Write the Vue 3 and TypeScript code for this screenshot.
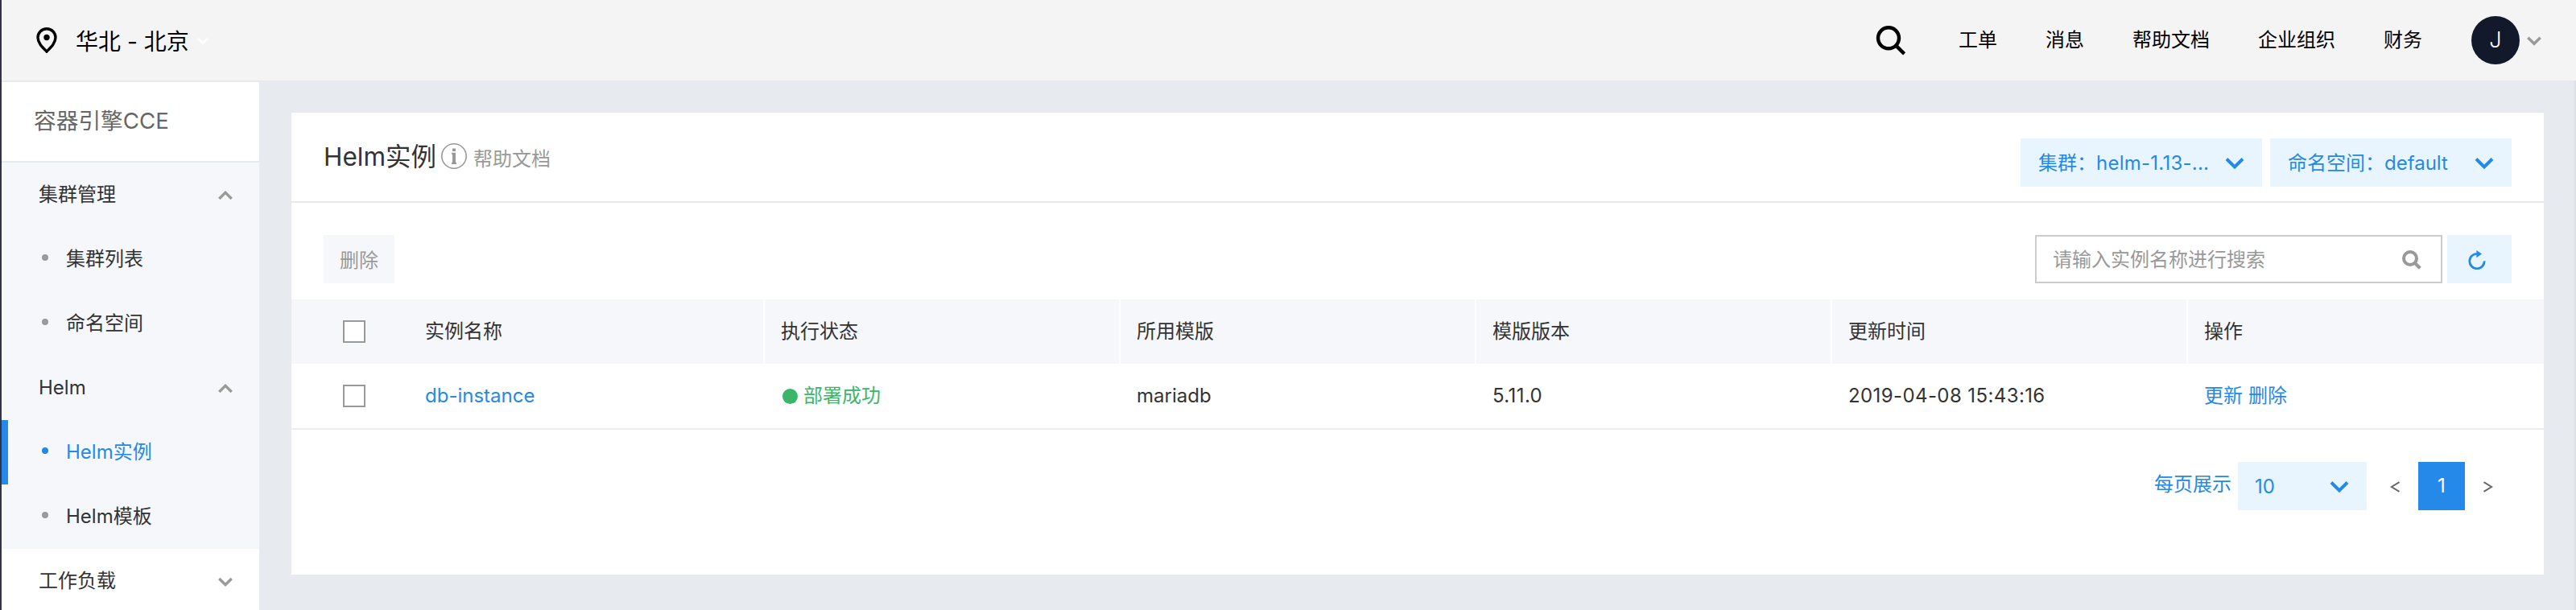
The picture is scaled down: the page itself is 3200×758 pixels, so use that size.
<script setup lang="ts">
interface MenuEntry {
  label: string
  kind: 'group' | 'item'
  open?: boolean
  active?: boolean
}

const navLinks: string[] = ['工单', '消息', '帮助文档', '企业组织', '财务']

const menu: MenuEntry[] = [
  { label: '集群管理', kind: 'group', open: true },
  { label: '集群列表', kind: 'item' },
  { label: '命名空间', kind: 'item' },
  { label: 'Helm', kind: 'group', open: true },
  { label: 'Helm实例', kind: 'item', active: true },
  { label: 'Helm模板', kind: 'item' },
  { label: '工作负载', kind: 'group', open: false },
]

const columns: string[] = ['实例名称', '执行状态', '所用模版', '模版版本', '更新时间', '操作']

const rows = [
  {
    name: 'db-instance',
    status: '部署成功',
    template: 'mariadb',
    version: '5.11.0',
    updated: '2019-04-08 15:43:16',
  },
]
</script>

<template>
  <div class="page">
    <header class="topbar">
      <svg class="pin" viewBox="0 0 26 32">
        <path d="M13 1.8C6.8 1.8 2 6.5 2 12.6 2 19.6 8 25 13 30c5-5 11-10.4 11-17.4C24 6.5 19.2 1.8 13 1.8z" fill="none" stroke="#000" stroke-width="3.4" />
        <circle cx="13" cy="12.5" r="3.7" fill="#000" />
      </svg>
      <span class="region">华北 - 北京</span>
      <svg class="region-arrow" viewBox="0 0 16 10"><path d="M1.5 2L8 7.5L14.5 2" fill="none" stroke="#fff" stroke-width="2.6" /></svg>
      <nav class="links">
        <svg class="top-search" viewBox="0 0 38 38">
          <circle cx="16" cy="16.3" r="13" fill="none" stroke="#000" stroke-width="4.4" />
          <path d="M25.3 25.6L35.6 35.9" stroke="#000" stroke-width="4.4" />
        </svg>
        <a v-for="link in navLinks" :key="link" class="link">{{ link }}</a>
      </nav>
      <span class="avatar">J</span>
      <svg class="user-arrow" viewBox="0 0 18 12"><path d="M1.3 1.8L9 9.3L16.7 1.8" fill="none" stroke="#999" stroke-width="3.4" /></svg>
    </header>

    <div class="body">
      <aside class="sidebar">
        <h2 class="product">容器引擎CCE</h2>
        <ul class="menu">
          <li
            v-for="entry in menu"
            :key="entry.label"
            :class="['entry', entry.kind, { active: entry.active, closed: entry.kind === 'group' && !entry.open }]"
          >
            <i v-if="entry.kind === 'item'" class="dot"></i>
            <span class="label">{{ entry.label }}</span>
            <svg v-if="entry.kind === 'group'" class="fold" viewBox="0 0 18 12">
              <path :d="entry.open ? 'M1.3 10L9 2.4L16.7 10' : 'M1.3 2L9 9.6L16.7 2'" fill="none" stroke="#999" stroke-width="3.4" />
            </svg>
          </li>
        </ul>
      </aside>

      <main class="content">
        <section class="card">
          <div class="card-head">
            <h1 class="title">Helm实例</h1>
            <svg class="info" viewBox="0 0 32 32">
              <circle cx="16" cy="16" r="15.2" fill="none" stroke="#999" stroke-width="1.6" />
              <path d="M14 6.5h4v3.6h-4zM13 11.8H18V24h1v2h-6v-2h1v-10.2h-1z" fill="#999" />
            </svg>
            <a class="help">帮助文档</a>
            <div class="selects">
              <div class="select">
                <span>集群：<em>helm-1.13-...</em></span>
                <svg class="arrow" viewBox="0 0 24 16"><path d="M2 2.5L12 12.5L22 2.5" fill="none" stroke="#2589e9" stroke-width="4" /></svg>
              </div>
              <div class="select">
                <span>命名空间：default</span>
                <svg class="arrow" viewBox="0 0 24 16"><path d="M2 2.5L12 12.5L22 2.5" fill="none" stroke="#2589e9" stroke-width="4" /></svg>
              </div>
            </div>
          </div>

          <div class="toolbar">
            <button class="delete" type="button">删除</button>
            <div class="search">
              <span class="placeholder">请输入实例名称进行搜索</span>
              <svg class="search-icon" viewBox="0 0 24 24">
                <circle cx="10" cy="10" r="8" fill="none" stroke="#999" stroke-width="4" />
                <path d="M15.5 15.5L22.3 22.3" stroke="#999" stroke-width="4.2" />
              </svg>
            </div>
            <button class="refresh" type="button">
              <svg viewBox="0 0 24 24">
                <path d="M12.5 4.4A9.2 9.2 0 1 0 21.2 13.4" fill="none" stroke="#2589e9" stroke-width="2.8" />
                <path d="M11.4 0L18 4.6L11.4 9.2z" fill="#2589e9" />
              </svg>
            </button>
          </div>

          <div class="grid head">
            <div class="check"><i class="box"></i></div>
            <div v-for="col in columns" :key="col" class="cell">{{ col }}</div>
          </div>
          <div v-for="row in rows" :key="row.name" class="grid row">
            <div class="check"><i class="box"></i></div>
            <div class="cell"><a class="blue">{{ row.name }}</a></div>
            <div class="cell status"><i class="state"></i><span>{{ row.status }}</span></div>
            <div class="cell">{{ row.template }}</div>
            <div class="cell number">{{ row.version }}</div>
            <div class="cell number">{{ row.updated }}</div>
            <div class="cell actions"><a>更新</a><a>删除</a></div>
          </div>

          <div class="pager">
            <span class="per-page">每页展示</span>
            <div class="size">
              <span>10</span>
              <svg class="arrow" viewBox="0 0 24 16"><path d="M2 2.5L12 12.5L22 2.5" fill="none" stroke="#2589e9" stroke-width="4" /></svg>
            </div>
            <svg class="step" viewBox="0 0 12 14"><path d="M11.5 1.2L1.8 7L11.5 12.8" fill="none" stroke="#666" stroke-width="2" /></svg>
            <span class="current">1</span>
            <svg class="step" viewBox="0 0 12 14"><path d="M0.5 1.2L10.2 7L0.5 12.8" fill="none" stroke="#666" stroke-width="2" /></svg>
          </div>
        </section>
      </main>
      <div class="edge"></div>
    </div>
  </div>
</template>

<style>
body {
  margin: 0;
}
</style>

<style scoped>
* {
  box-sizing: border-box;
}
.page {
  width: 3200px;
  height: 758px;
  overflow: hidden;
  border-left: 2px solid #32324a;
  background: #e7eaef;
  color: #333;
  font-family: Inter, "Noto Sans CJK SC", sans-serif;
  font-size: 24px;
  font-weight: 380;
  line-height: 34px;
  white-space: nowrap;
  display: flex;
  flex-direction: column;
}
.topbar {
  height: 100px;
  flex: none;
  background: #f4f4f4;
  display: flex;
  align-items: center;
  padding: 0 43px 0 43px;
  color: #000;
}
.pin {
  width: 26px;
  height: 32px;
  margin-right: 23px;
}
.region {
  font-size: 28px;
  margin-top: 3px;
}
.region-arrow {
  width: 16px;
  height: 10px;
  margin: 2px 0 0 9px;
}
.links {
  margin-left: auto;
  display: flex;
  align-items: center;
  gap: 60px;
}
.top-search {
  width: 38px;
  height: 38px;
  margin-right: 5px;
}
.avatar {
  width: 60px;
  height: 60px;
  margin-left: 61px;
  border-radius: 50%;
  background: #12192b;
  color: #fff;
  font-size: 27px;
  font-weight: 350;
  text-align: center;
  line-height: 60px;
}
.user-arrow {
  width: 18px;
  height: 12px;
  margin: 2px 0 0 9px;
}
.body {
  flex: 1;
  display: flex;
  min-height: 0;
}
.sidebar {
  width: 320px;
  flex: none;
  background: #fff;
  border-top: 2px solid #e7e9ec;
}
.product {
  margin: 0;
  height: 100px;
  padding-left: 40px;
  border-bottom: 2px solid #e7e9ec;
  font-size: 27.7px;
  font-weight: 370;
  line-height: 97px;
  color: #666;
}
.menu {
  margin: 0;
  padding: 0;
  list-style: none;
}
.entry {
  height: 80px;
  display: flex;
  align-items: center;
  background: #f6f7fb;
  padding: 0 33px 0 46px;
}
.entry.closed {
  background: #fff;
}
.fold {
  width: 18px;
  height: 12px;
  margin: 2px 0 0 auto;
}
.dot {
  width: 8px;
  height: 8px;
  margin: 0 22px 4px 4px;
  border-radius: 50%;
  background: #999;
}
.entry.active {
  border-left: 8px solid #2589e9;
  padding-left: 38px;
  color: #2589e9;
}
.active .dot {
  background: #2589e9;
}
.content {
  flex: 1;
  padding: 40px 36px 44px 40px;
}
.edge {
  width: 4px;
  background: linear-gradient(90deg, #e7eaef, #dcdfe5);
}
.card {
  height: 574px;
  background: #fff;
}
.card-head {
  height: 112px;
  border-bottom: 2px solid #e7e9eb;
  padding: 0 40px;
  display: flex;
  align-items: center;
}
.title {
  margin: 0;
  width: 138px;
  font-size: 31.5px;
  font-weight: 370;
}
.info {
  width: 32px;
  height: 32px;
  margin: 0 8px 2px;
}
.help {
  margin-top: 5px;
  color: #999;
}
.selects {
  margin: 14px 0 0 auto;
  display: flex;
  gap: 10px;
}
.select,
.size {
  width: 300px;
  height: 60px;
  padding: 2px 22px 0;
  background: #e8f5fe;
  color: #2589e9;
  display: flex;
  align-items: center;
  justify-content: space-between;
}
.select em {
  font-style: normal;
  letter-spacing: 0.25px;
}
.arrow {
  width: 24px;
  height: 16px;
}
.toolbar {
  height: 120px;
  padding: 20px 40px 0;
  display: flex;
  align-items: center;
}
.delete,
.refresh {
  border: 0;
  padding: 0;
  height: 60px;
  font: inherit;
}
.delete {
  width: 88px;
  padding-top: 3px;
  background: #f6f7fb;
  color: #999;
}
.search {
  width: 506px;
  height: 60px;
  margin: 0 6px 0 auto;
  border: 2px solid #ccc;
  padding: 1px 24px 0 20px;
  display: flex;
  align-items: center;
  justify-content: space-between;
  color: #999;
}
.search-icon {
  width: 24px;
  height: 24px;
}
.refresh {
  width: 80px;
  background: #e8f5fe;
}
.refresh svg {
  display: block;
  width: 24px;
  height: 24px;
  margin: 2px auto 0 25px;
}
.grid {
  display: grid;
  grid-template-columns: 146px repeat(6, 442px);
  height: 80px;
}
.head {
  background: #f6f7fb;
}
.row {
  height: 82px;
  border-bottom: 2px solid #ebedf5;
}
.check {
  display: flex;
  align-items: center;
  padding-left: 64px;
}
.box {
  width: 28px;
  height: 28px;
  border: 2px solid #999;
  background: #fff;
}
.cell {
  padding-left: 20px;
  display: flex;
  align-items: center;
}
.head .cell:not(:last-child) {
  border-right: 2px solid #fff;
}
.number {
  letter-spacing: 0.4px;
}
.blue,
.actions a {
  color: #2589e9;
}
.actions {
  gap: 7px;
}
.status {
  color: #39b66a;
}
.state {
  width: 19px;
  height: 19px;
  margin: 0 7px 0 2px;
  border-radius: 50%;
  background: #39b66a;
}
.pager {
  display: flex;
  align-items: center;
  justify-content: flex-end;
  padding: 40px 63px 0 0;
}
.per-page {
  color: #2589e9;
  margin: 0 8px 4px 0;
}
.size {
  width: 160px;
  padding-left: 21px;
}
.step {
  width: 12px;
  height: 14px;
  margin-top: 2px;
}
.size + .step {
  margin-left: 29px;
}
.current {
  width: 58px;
  height: 60px;
  margin: 0 23px;
  background: #2589e9;
  color: #fff;
  line-height: 60px;
  text-align: center;
}
</style>
